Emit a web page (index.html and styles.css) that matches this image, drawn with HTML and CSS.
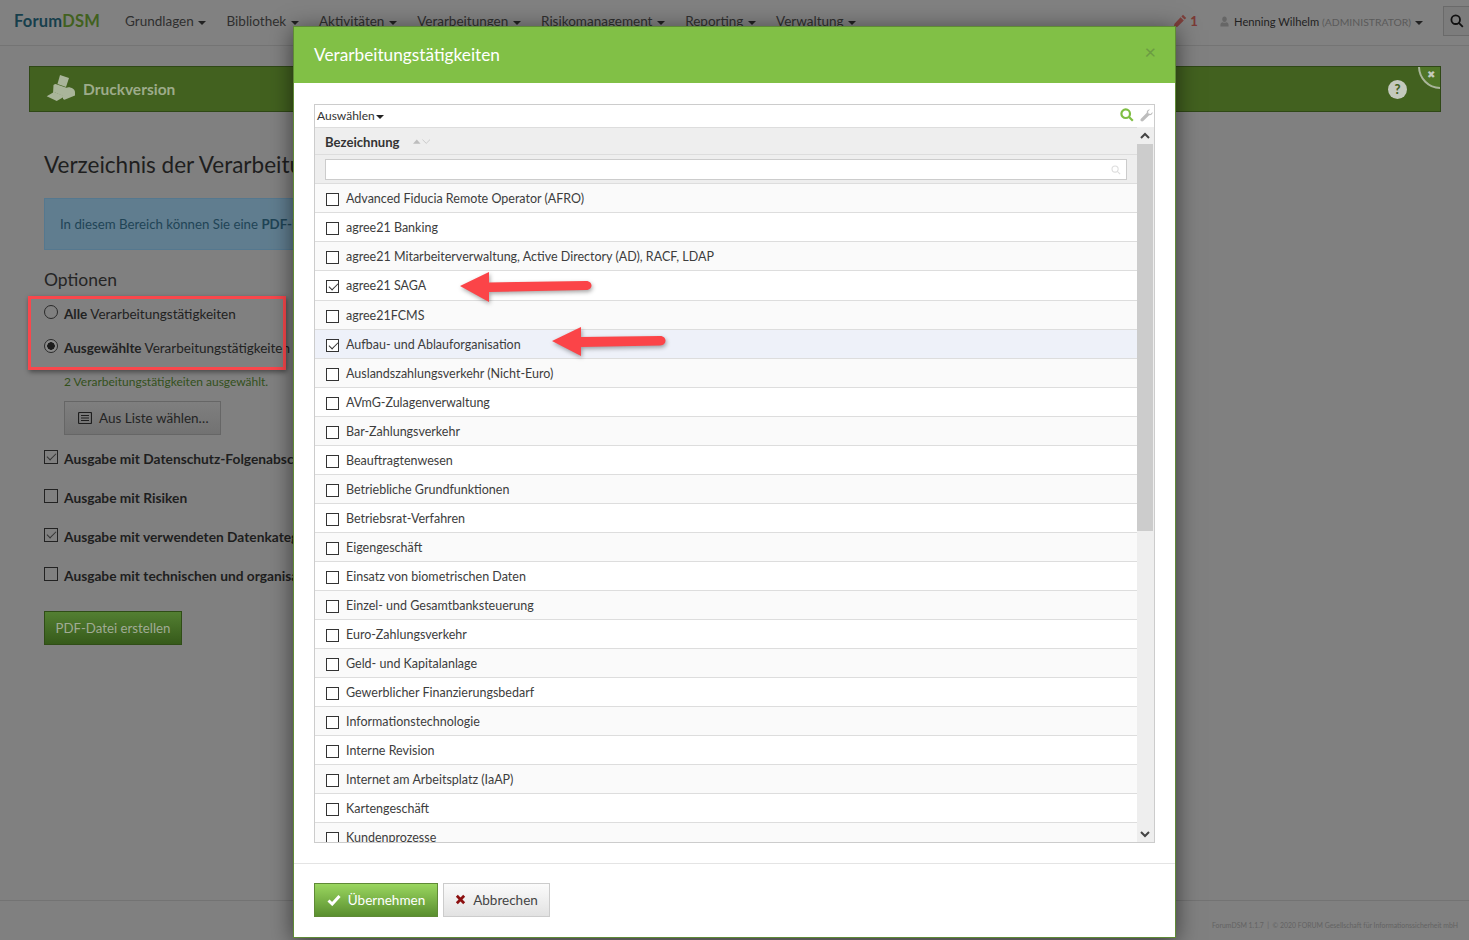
FILE: index.html
```html
<!DOCTYPE html>
<html lang="de">
<head>
<meta charset="utf-8">
<title>ForumDSM</title>
<link rel="stylesheet" href="styles.css">
</head>
<body>
<div class="page">
  <header class="navbar">
    <a class="brand">Forum<span class="brand-accent">DSM</span></a>
    <nav class="menu">
      <span class="menu-item">Grundlagen <i class="caret"></i></span>
      <span class="menu-item">Bibliothek <i class="caret"></i></span>
      <span class="menu-item">Aktivitäten <i class="caret"></i></span>
      <span class="menu-item">Verarbeitungen <i class="caret"></i></span>
      <span class="menu-item">Risikomanagement <i class="caret"></i></span>
      <span class="menu-item">Reporting <i class="caret"></i></span>
      <span class="menu-item">Verwaltung <i class="caret"></i></span>
    </nav>
    <div class="nav-right">
      <span class="edits">
        <svg class="edit-icon" viewBox="0 0 14 14"><path d="M10 0.8l3.2 3.2-1.6 1.6-3.2-3.2zM7.6 3.2l3.2 3.2-6.3 6.3-4 1 1-4z"/></svg>
        1
      </span>
      <span class="user">
        <svg class="user-icon" viewBox="0 0 10 12"><path d="M5 0.5c1.500 0 2.500 1.200 2.500 2.900S6.500 6.500 5 6.500 2.500 5.100 2.500 3.400 3.500 0.500 5 0.500zM0.500 11.500V9.500c0-1.300 1.200-2.300 2.500-2.600.6.4 1.300.6 2 .6s1.400-.2 2-.6c1.300.3 2.500 1.300 2.500 2.600v2z"/></svg>
        <span class="user-name">Henning Wilhelm</span> <span class="role">(ADMINISTRATOR)</span> <i class="caret"></i>
      </span>
      <span class="nav-search">
        <svg viewBox="0 0 14 14"><circle cx="5.700" cy="5.700" r="4.300"/><path d="M8.800 8.800l4 4"/></svg>
      </span>
    </div>
  </header>

  <main class="content">
    <div class="banner">
      <svg class="printer" viewBox="0 0 30 30">
        <path d="M14 2l9 3-3 9-8.500-3z"/>
        <path d="M7.500 12c1.500-1.500 3-1 3.500-.5l9.500 3.300c1.500-1 4.500-.5 6.500 1 2 1.500 2 2.700 2 4.700v2l-10.500 4.200-1.500-.7v-3L9 19.500l-2 1z"/>
        <path d="M.7 23.300L8 19l11 4.300-8.300 4.700z"/>
      </svg>
      <span class="banner-title">Druckversion</span>
      <span class="help">?</span>
      <span class="corner">✖</span>
    </div>
    <div class="inner">
      <h1 class="title">Verzeichnis der Verarbeitungstätigkeiten</h1>
      <div class="info">In diesem Bereich können Sie eine <b>PDF-Datei</b> erstellen.</div>
      <h2 class="sub">Optionen</h2>
      <label class="opt opt-first"><i class="radio"></i><span><b>Alle</b> Verarbeitungstätigkeiten</span></label>
      <label class="opt"><i class="radio radio-on"></i><span><b>Ausgewählte</b> Verarbeitungstätigkeiten</span></label>
      <p class="selected-note">2 Verarbeitungstätigkeiten ausgewählt.</p>
      <button class="list-btn">
        <svg viewBox="0 0 14 12"><rect x="0.500" y="0.500" width="13" height="11" rx="1"/><path d="M3 3.500h8M3 6h8M3 8.500h8"/></svg>
        Aus Liste wählen…
      </button>
      <label class="chk-line chk-first"><i class="box box-dim box-on"></i><b>Ausgabe mit Datenschutz-Folgenabschätzung</b></label>
      <label class="chk-line"><i class="box box-dim"></i><b>Ausgabe mit Risiken</b></label>
      <label class="chk-line"><i class="box box-dim box-on"></i><b>Ausgabe mit verwendeten Datenkategorien</b></label>
      <label class="chk-line"><i class="box box-dim"></i><b>Ausgabe mit technischen und organisatorischen Maßnahmen</b></label>
      <button class="pdf-btn">PDF-Datei erstellen</button>
    </div>
  </main>

  <footer class="footer">ForumDSM 1.1.7 &nbsp;|&nbsp; © 2020 FORUM Gesellschaft für Informationssicherheit mbH</footer>
</div>

<div class="annot-rect"></div>

<section class="modal">
  <div class="modal-head">
    <span class="modal-title">Verarbeitungstätigkeiten</span>
    <span class="modal-close">×</span>
  </div>
  <div class="modal-body">
    <div class="grid">
      <div class="toolbar">
        <span>Auswählen <i class="caret caret-tight"></i></span>
        <span class="tools">
          <svg class="tool-search" viewBox="0 0 14 14"><circle cx="5.700" cy="5.700" r="4.300"/><path d="M8.800 8.800l4 4"/></svg>
          <svg class="tool-wrench" viewBox="0 0 14 14"><path d="M13.500 3.200c.4 2-1.400 3.900-3.600 3.500L3.500 13c-.7.700-1.800.7-2.500 0s-.7-1.800 0-2.500l6.300-6.400C6.900 1.900 8.800.1 10.800.500L8.700 2.600l.4 2.300 2.300.4z"/></svg>
        </span>
      </div>
      <div class="grid-main">
        <div class="grid-table">
          <div class="grid-head">Bezeichnung
            <svg class="sort" viewBox="0 0 18 7"><path class="sort-up" d="M0 6l4-4.500L8 6z"/><path class="sort-down" d="M10 1.500l4 4 4-4"/></svg>
          </div>
          <div class="grid-filter">
            <div class="filter-input">
              <svg viewBox="0 0 14 14"><circle cx="5.700" cy="5.700" r="4.300"/><path d="M8.800 8.800l4 4"/></svg>
            </div>
          </div>
          <div class="rows">
            <div class="row"><i class="box"></i>Advanced Fiducia Remote Operator (AFRO)</div>
            <div class="row"><i class="box"></i>agree21 Banking</div>
            <div class="row"><i class="box"></i>agree21 Mitarbeiterverwaltung, Active Directory (AD), RACF, LDAP</div>
            <div class="row row-tall"><i class="box box-on"></i>agree21 SAGA</div>
            <div class="row"><i class="box"></i>agree21FCMS</div>
            <div class="row row-hl"><i class="box box-on"></i>Aufbau- und Ablauforganisation</div>
            <div class="row"><i class="box"></i>Auslandszahlungsverkehr (Nicht-Euro)</div>
            <div class="row"><i class="box"></i>AVmG-Zulagenverwaltung</div>
            <div class="row"><i class="box"></i>Bar-Zahlungsverkehr</div>
            <div class="row"><i class="box"></i>Beauftragtenwesen</div>
            <div class="row"><i class="box"></i>Betriebliche Grundfunktionen</div>
            <div class="row"><i class="box"></i>Betriebsrat-Verfahren</div>
            <div class="row"><i class="box"></i>Eigengeschäft</div>
            <div class="row"><i class="box"></i>Einsatz von biometrischen Daten</div>
            <div class="row"><i class="box"></i>Einzel- und Gesamtbanksteuerung</div>
            <div class="row"><i class="box"></i>Euro-Zahlungsverkehr</div>
            <div class="row"><i class="box"></i>Geld- und Kapitalanlage</div>
            <div class="row"><i class="box"></i>Gewerblicher Finanzierungsbedarf</div>
            <div class="row"><i class="box"></i>Informationstechnologie</div>
            <div class="row"><i class="box"></i>Interne Revision</div>
            <div class="row"><i class="box"></i>Internet am Arbeitsplatz (IaAP)</div>
            <div class="row"><i class="box"></i>Kartengeschäft</div>
            <div class="row"><i class="box"></i>Kundenprozesse</div>
          </div>
        </div>
        <div class="scrollbar">
          <svg class="sb-arrow" viewBox="0 0 10 7"><path d="M1 6l4-4 4 4"/></svg>
          <div class="sb-thumb"></div>
          <svg class="sb-arrow sb-arrow-down" viewBox="0 0 10 7"><path d="M1 1l4 4 4-4"/></svg>
        </div>
      </div>
    </div>
  </div>
  <div class="modal-foot">
    <button class="btn-ok">
      <svg viewBox="0 0 14 12"><path d="M1.500 6.500l3.700 3.500 7.300-8"/></svg>
      Übernehmen
    </button>
    <button class="btn-cancel">
      <svg viewBox="0 0 12 12"><path d="M2 2l8 8M10 2l-8 8"/></svg>
      Abbrechen
    </button>
  </div>
</section>

<svg class="arrow arrow-a" viewBox="0 0 134 32"><path d="M1 15L30 1v10.500l97-1.500c4 0 5.500 2.500 5.500 4.500s-1.500 4.500-5.500 4.500l-97 2V31z"/></svg>
<svg class="arrow arrow-b" viewBox="0 0 116 30"><path d="M1 15L30 1v10l79-1c4 0 5.500 2.500 5.500 4.500s-1.500 5-5.500 5l-79 1.500V30z"/></svg>
</body>
</html>
```

FILE: styles.css
```css
* { box-sizing: border-box; }
html, body { margin: 0; padding: 0; height: 940px; overflow: hidden; }
body {
  background: #808080;
  font-family: "Lato", "Noto Sans", sans-serif;
  font-size: 13px;
  color: #222;
  position: relative;
}
i { font-style: normal; display: inline-block; }

.page { height: 940px; display: flex; flex-direction: column; overflow: hidden; }

/* Navbar */
.navbar {
  height: 46px;
  flex: none;
  display: flex;
  align-items: center;
  padding: 0 0 3px 14px;
  border-bottom: 1px solid #747474;
  background: #818181;
}
.brand { font-size: 16.500px; font-weight: 700; color: #173f4c; letter-spacing: .2px; width: 111px; }
.brand-accent { color: #42611f; }
.menu { display: flex; gap: 20.300px; color: #2f2f2f; font-size: 13.500px; }
.menu-item { white-space: nowrap; }
.caret {
  width: 0; height: 0;
  border-left: 4px solid transparent;
  border-right: 4px solid transparent;
  border-top: 4px solid #222;
  vertical-align: middle;
  margin-left: 1px;
}
.caret-tight { margin-left: -2px; }
.nav-right { margin-left: auto; display: flex; align-items: center; }
.edits { display: flex; align-items: center; gap: 3px; color: #7b3a36; font-weight: 900; font-size: 13px; width: 47px; }
.edit-icon { width: 14px; height: 14px; fill: #7d3f3b; }
.user { font-size: 11.200px; color: #1f1f1f; white-space: nowrap; margin-right: 20px; }
.user-icon { width: 9px; height: 11px; fill: #666; vertical-align: -1px; margin-right: 2px; }
.role { color: #5a5a5a; font-size: 10.400px; }
.nav-search {
  width: 26px; height: 30px;
  border: 1px solid #6a6a6a;
  border-right: 0;
  background: #7c7c7c;
  display: flex; align-items: center; justify-content: flex-start;
  padding-left: 6px;
}
.nav-search svg { width: 14px; height: 14px; fill: none; stroke: #111; stroke-width: 1.800; }

/* Content */
.content { padding: 20px 28px 0 29px; flex: none; }
.banner {
  height: 46px;
  background: #42611f;
  border: 1px solid #2f4816;
  display: flex; align-items: center;
  padding-left: 16px;
  position: relative;
  overflow: hidden;
}
.printer { width: 30px; height: 30px; fill: #a9b59a; margin: -2px 7px 0 0; }
.banner-title { font-size: 15.500px; font-weight: 700; color: #9dab8a; }
.help {
  margin-left: auto; margin-right: 33px;
  width: 19px; height: 19px; border-radius: 50%;
  background: #c4c9be; color: #42611f;
  font-size: 13px; font-weight: 900;
  display: flex; align-items: center; justify-content: center;
}
.corner {
  position: absolute; top: -23px; right: -23px;
  width: 45px; height: 45px;
  border: 2px solid #a9b59a;
  border-radius: 50%;
  background: #4f7527;
  color: #c4c9be; font-size: 10px;
  display: flex; align-items: flex-end; justify-content: flex-start;
  padding: 0 0 7px 7px;
}

.inner { padding-left: 15px; }
.title { margin: 39px 0 0; font-size: 22.500px; line-height: 28px; font-weight: 400; color: #1e1e1e; white-space: nowrap; }
.info {
  margin-top: 19px;
  height: 52px;
  width: 700px;
  background: #607d8f;
  border: 1px solid #55788f;
  color: #1f4456;
  padding-left: 15px;
  line-height: 50px;
  font-size: 13.250px;
}
.sub { margin: 19px 0 0; font-size: 17.500px; line-height: 22px; font-weight: 400; color: #252525; }
.opt { display: flex; gap: 6px; height: 34px; color: #222; white-space: nowrap; font-size: 13.500px; }
.opt-first { margin-top: 11px; }
.opt span { line-height: 24px; }
.radio { width: 14px; height: 14px; border: 1px solid #2a2a2a; border-radius: 50%; margin-top: 3px; flex: none; }
.radio-on { background: radial-gradient(circle, #1c1c1c 0 3.500px, #8a8a8a 4px); }
.selected-note { margin: 4px 0 0 20px; line-height: 16px; font-size: 12px; color: #33501b; }
.list-btn {
  display: flex; align-items: center; gap: 7px;
  margin: 11px 0 0 20px;
  width: 157px; height: 34px;
  padding: 0 0 0 13px;
  background: linear-gradient(#7f7f7f, #727272);
  border: 1px solid #666;
  font: inherit; font-size: 13.500px; color: #242424;
}
.list-btn svg { width: 14px; height: 12px; fill: none; stroke: #1e1e1e; stroke-width: 1.200; }
.chk-line { display: flex; gap: 6px; height: 39px; white-space: nowrap; line-height: 20px; color: #1e1e1e; font-size: 13.750px; }
.chk-first { margin-top: 12px; }
.chk-line b { padding-top: 2px; }
.box {
  width: 13px; height: 13px;
  border: 1px solid #333;
  flex: none;
  position: relative;
  background: #fff;
}
.box-dim { width: 14px; height: 14px; background: transparent; margin-top: 3px; border-color: #222; }
.box-on::after {
  content: "";
  position: absolute;
  left: 2px; top: 2px;
  width: 8px; height: 4px;
  border-left: 1px solid #333;
  border-bottom: 1px solid #333;
  transform: rotate(-45deg);
}
.pdf-btn {
  display: block;
  margin-top: 8px;
  width: 138px; height: 34px;
  background: linear-gradient(#537f32, #365a1a);
  border: 1px solid #2f4d16;
  color: #a0ab95;
  font: inherit; font-size: 13.250px;
}

.footer {
  margin-top: auto;
  height: 40px;
  flex: none;
  border-top: 1px solid #737373;
  text-align: right;
  padding: 20px 11px 0 0;
  font-size: 6.900px;
  color: #636363;
  white-space: nowrap;
}

/* Annotation */
.annot-rect {
  position: absolute;
  left: 28px; top: 296px;
  width: 258px; height: 74px;
  border: 3px solid #f9474c;
  box-shadow: 1px 2px 5px rgba(0, 0, 0, .45);
}
.arrow {
  position: absolute;
  fill: #fb4448;
  filter: drop-shadow(1px 2px 2px rgba(0, 0, 0, .35));
}
.arrow-a { left: 459px; top: 271px; width: 134px; height: 32px; }
.arrow-b { left: 551px; top: 326px; width: 116px; height: 30px; }

/* Modal */
.modal {
  position: absolute;
  left: 293px; top: 26px;
  width: 883px; height: 912px;
  background: #fff;
  border: 1px solid #5f8a36;
  box-shadow: 0 4px 22px rgba(0, 0, 0, .55);
  display: flex; flex-direction: column;
}
.modal-head {
  height: 56px; flex: none;
  background: #81c046;
  display: flex; align-items: center; justify-content: space-between;
  padding: 0 19px 2px 20px;
}
.modal-title { color: #fff; font-size: 17.250px; }
.modal-close { color: #6b9b42; font-size: 20px; margin-top: -6px; }
.modal-body { flex: none; padding: 21px 20px 20px; border-bottom: 1px solid #e4e4e4; }
.grid {
  height: 739px;
  border: 1px solid #ccc;
  display: flex; flex-direction: column;
  overflow: hidden;
}
.toolbar {
  height: 22px; flex: none;
  display: flex; align-items: center; justify-content: space-between;
  padding: 0 1px 1px 2px;
  font-size: 12px;
  color: #333;
}
.tools { display: flex; gap: 6px; align-items: center; margin-top: -1px; }
.tool-search { width: 14px; height: 14px; fill: none; stroke: #7fbe43; stroke-width: 2.200; }
.tool-wrench { width: 13px; height: 13px; fill: #bdbdbd; }
.grid-main { flex: 1; display: flex; min-height: 0; }
.grid-table { flex: 1; min-width: 0; overflow: hidden; }
.grid-head {
  height: 28px;
  background: #eee;
  border-top: 1px solid #ddd;
  border-bottom: 1px solid #ddd;
  padding: 1px 0 0 10px;
  font-weight: 700; font-size: 13.100px; color: #333;
  display: flex; align-items: center;
}
.sort { width: 17px; height: 7px; margin-left: 13px; }
.sort-up { fill: #bdbdbd; }
.sort-down { fill: none; stroke: #c8c8c8; stroke-width: 1; }
.grid-filter {
  height: 29px;
  background: #eee;
  border-bottom: 1px solid #ddd;
  padding: 4px 10px 0;
}
.filter-input {
  height: 21px;
  background: #fff;
  border: 1px solid #ccc;
  display: flex; align-items: center; justify-content: flex-end;
  padding-right: 5px;
}
.filter-input svg { width: 10px; height: 10px; fill: none; stroke: #ddd; stroke-width: 1.500; }
.row {
  height: 29px;
  display: flex; align-items: center;
  padding-left: 11px;
  gap: 7px;
  border-bottom: 1px solid #ddd;
  background: #fff;
  color: #3d3d3d;
  font-size: 12.500px;
  white-space: nowrap;
}
.row .box { margin-top: 2px; }
.row:nth-child(odd) { background: #fafafa; }
.row-tall { height: 30px; }
.row.row-hl { background: #eef1f9; }
.scrollbar {
  width: 17px; flex: none;
  background: #eee;
  display: flex; flex-direction: column;
}
.sb-arrow { width: 10px; height: 7px; margin: 5px 3px; fill: none; stroke: #444; stroke-width: 2; flex: none; }
.sb-arrow-down { margin-top: auto; margin-bottom: 4px; }
.sb-thumb { height: 387px; margin-right: 1px; background: #ccc; flex: none; }
.modal-foot { padding: 19px 20px; display: flex; gap: 5px; }
.btn-ok {
  width: 124px; height: 34px;
  display: flex; align-items: center; justify-content: center; gap: 7px;
  background: linear-gradient(#9ad65f, #5a8f2f);
  border: 1px solid #5f8a36;
  color: #fff;
  font: inherit; font-size: 13.500px;
  padding: 0 0 1px;
}
.btn-ok svg { width: 14px; height: 12px; fill: none; stroke: #fff; stroke-width: 3; }
.btn-cancel {
  width: 107px; height: 34px;
  display: flex; align-items: center; justify-content: center; gap: 7px;
  background: linear-gradient(#fbfbfb, #e2e2e2);
  border: 1px solid #ccc;
  color: #444;
  font: inherit; font-size: 13.500px;
  padding: 0 0 1px;
}
.btn-cancel svg { width: 11px; height: 11px; fill: none; stroke: #8c1010; stroke-width: 3; }
```
